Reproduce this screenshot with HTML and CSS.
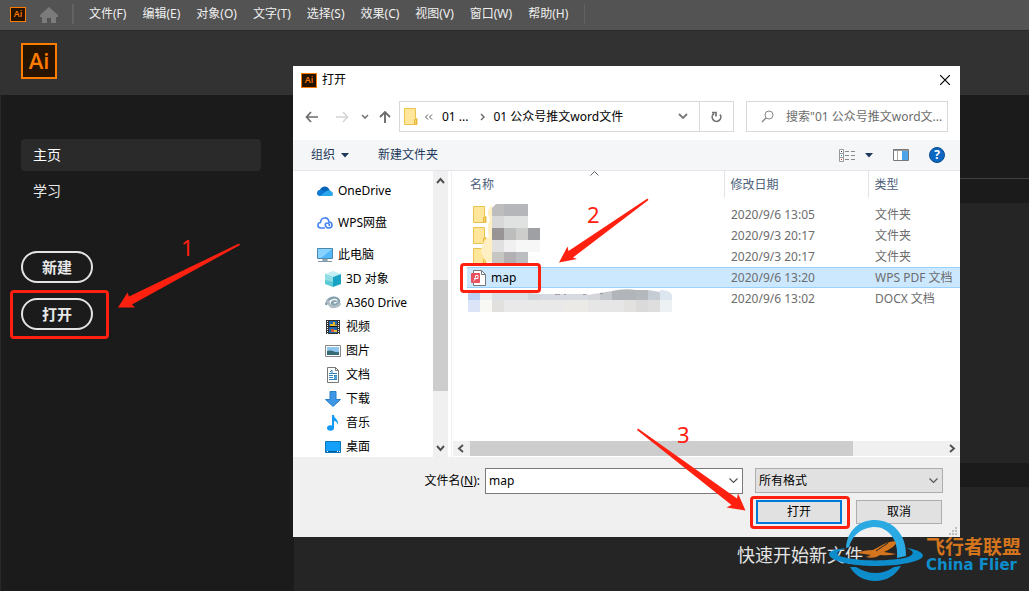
FILE: index.html
```html
<!DOCTYPE html>
<html lang="zh-CN">
<head>
<meta charset="utf-8">
<title>Ai 打开</title>
<link rel="stylesheet" href="styles.css">
</head>
<body>
<div class="app">
  <nav class="menubar">
    <span class="logo logo-small">Ai</span>
    <button class="home" aria-label="主页"><svg width="18" height="16" viewBox="0 0 18 16"><path fill="#7b7b7b" d="M9 0 18 8v2h-2v6h-5v-5H7v5H2v-6H0V8z"/></svg></button>
    <div class="menu">
      <button>文件(F)</button><button>编辑(E)</button><button>对象(O)</button><button>文字(T)</button><button>选择(S)</button><button>效果(C)</button><button>视图(V)</button><button>窗口(W)</button><button>帮助(H)</button>
    </div>
  </nav>
  <header class="brand"><span class="logo logo-large">Ai</span></header>
  <div class="home-body">
    <aside class="side">
      <a class="side-link current" href="#">主页</a>
      <a class="side-link" href="#">学习</a>
      <div class="side-actions">
        <button>新建</button>
        <button>打开</button>
      </div>
    </aside>
    <main class="stage">
      <div class="band band-top"></div>
      <div class="band band-row"></div>
      <div class="panel"></div>
      <div class="band band-low"></div>
      <h2 class="quick">快速开始新文件</h2>
    </main>
  </div>
</div>

<section class="dialog" role="dialog" aria-label="打开">
  <div class="titlebar">
    <span class="logo logo-small">Ai</span><span class="title">打开</span>
    <button class="close" aria-label="关闭"><svg width="10" height="10" viewBox="0 0 10 10"><path d="M0 0 10 10M10 0 0 10" stroke="#000" stroke-width="1.200"/></svg></button>
  </div>
  <div class="navrow">
    <div class="arrows">
      <button aria-label="后退"><svg width="14" height="12" viewBox="0 0 14 12"><path d="M13 6H2M6 1 1.500 6 6 11" fill="none" stroke="#6d6d6d" stroke-width="1.700"/></svg></button>
      <button aria-label="前进"><svg width="14" height="12" viewBox="0 0 14 12"><path d="M1 6h11M8 1l4.500 5L8 11" fill="none" stroke="#d4d4d4" stroke-width="1.500"/></svg></button>
      <button class="narrow" aria-label="最近"><svg width="8" height="6" viewBox="0 0 8 6"><path d="m1 1 3 3 3-3" fill="none" stroke="#777" stroke-width="1.600"/></svg></button>
      <button class="narrow" aria-label="向上"><svg width="12" height="14" viewBox="0 0 12 14"><path d="M6 13V2M1 7l5-5 5 5" fill="none" stroke="#6d6d6d" stroke-width="1.900"/></svg></button>
    </div>
    <div class="address">
      <svg class="folder" width="14" height="17" viewBox="0 0 14 17"><path d="M.5.500h11v10h1.500v6H.500z" fill="#ffe69a" stroke="#ebc44f"/><path d="M10.500 16v-4.500h2V16z" fill="#ffd966" stroke="#e5b93e"/></svg>
      <span class="crumbs"><svg width="9" height="6" viewBox="0 0 9 6"><path d="M4 .500 1.500 3 4 5.500M8 .500 5.500 3 8 5.500" fill="none" stroke="#555"/></svg><span>01 ...</span><svg class="sep" width="5" height="8" viewBox="0 0 5 8"><path d="m1 1 3 3-3 3" fill="none" stroke="#666" stroke-width="1.400"/></svg><span>01 公众号推文word文件</span></span>
      <button class="drop" aria-label="历史"><svg width="10" height="7" viewBox="0 0 10 7"><path d="m1 1 4 4 4-4" fill="none" stroke="#777" stroke-width="1.800"/></svg></button>
      <button class="refresh" aria-label="刷新"><svg width="12" height="12" viewBox="0 0 12 12"><path d="M3 2.500a4.300 4.300 0 1 0 6 1M1 1.500h4v4" fill="none" stroke="#737373" stroke-width="1.700"/></svg></button>
    </div>
    <label class="search">
      <svg width="13" height="13" viewBox="0 0 13 13"><path d="M5 8 1 12" stroke="#888" stroke-width="1.300"/><circle cx="8" cy="5" r="4" fill="none" stroke="#888"/></svg>
      <input type="text" aria-label="搜索" placeholder='搜索"01 公众号推文word文...'>
    </label>
  </div>
  <div class="toolbar">
    <button>组织<svg width="8" height="5" viewBox="0 0 8 5"><path d="M0 0h8L4 4.500z" fill="#1e395b"/></svg></button>
    <button>新建文件夹</button>
    <div class="view-tools">
      <button class="view" aria-label="视图"><svg width="17" height="13" viewBox="0 0 17 13"><path d="M.5.500h4v12h-4zM.500 4.500h4M.500 8.500h4" fill="#fff" stroke="#999"/><path d="M2 2h1v1H2z" fill="#333"/><path d="M2 6h1v1H2z" fill="#2f73c9"/><path d="M2 10h1v1H2z" fill="#d23"/><path d="M6 2.500h4m2 0h4M6 6.500h4m2 0h4M6 10.500h4m2 0h4" stroke="#8a8a8a"/></svg><svg width="8" height="5" viewBox="0 0 8 5"><path d="M0 0h8L4 4.500z" fill="#1e395b"/></svg></button>
      <button aria-label="预览窗格"><svg width="16" height="12" viewBox="0 0 16 12"><path d="M.5.500h15v11H.500z" fill="#fff" stroke="#777"/><path d="M1 1h14v1H1z" fill="#999"/><path d="M4.500 2v9" stroke="#aaa"/><path d="M9 2h6v9H9z" fill="#4ea4e8"/></svg></button>
      <button class="help" aria-label="帮助">?</button>
    </div>
  </div>
  <div class="content">
    <ul class="tree">
      <li class="root"><svg width="16" height="16" viewBox="0 0 16 16"><path d="M3 7c1-4 7-5 9-1l2 4H5z" fill="#0364b8"/><path d="M0 10c0-3 3-4 5-3l6 3-5 3H3c-2 0-3-1-3-3" fill="#0f78d4"/><path d="M8 9c3-3 8-1 8 2 0 2-1 2-3 2H3z" fill="#28a8ea"/></svg>OneDrive</li>
      <li class="root"><svg width="16" height="16" viewBox="0 0 16 16"><path d="M8 13H4C0 13 0 8 3.500 7.500 4 2 11 1 12 7c4 0 4 6 0 6-4 0-5-5-2-5 2 0 3 2 2 3" fill="none" stroke="#4584f0" stroke-width="1.600"/></svg>WPS网盘</li>
      <li class="root"><svg width="16" height="16" viewBox="0 0 16 16"><path d="M.5 1.500h15v10H.500z" fill="#53b9f8" stroke="#4b87a8"/><path d="m1 2 14 0-11 9H1z" fill="#87d2ff"/><path d="M6 12h4v2H6zM1 14.500h14" fill="#a7b2ba" stroke="#8199aa"/></svg>此电脑</li>
      <li><svg width="16" height="16" viewBox="0 0 16 16"><path d="m0 3 8-3 8 3-8 3z" fill="#c4eef4"/><path d="m0 3 8 3v10l-8-3z" fill="#5bc9d6"/><path d="m8 6 8-3v10l-8 3z" fill="#18a3c5"/><path d="m0 3 8 3v5L0 9z" fill="#8edde4"/></svg>3D 对象</li>
      <li><svg width="16" height="16" viewBox="0 0 16 16"><path d="M1 10C3 1 13 1 14 6c0 4-7 5-7 2 0-2 4-2 4-1" fill="none" stroke="#87a0ae" stroke-width="2.500"/><path d="M1 6c4-1 2 5 6 6 4 0 7-1 8-4" fill="none" stroke="#aebcc5" stroke-width="2.500"/></svg>A360 Drive</li>
      <li><svg width="16" height="16" viewBox="0 0 16 16"><path d="M1 1h14v14H1z" fill="#333"/><path d="M4 2h8v12H4z" fill="#2468b0"/><path d="M4 7.500h8" stroke="#111"/><path d="M5 5h3V3h2v3h2v1H5z" fill="#e4b729"/><path d="M6 10h3v3H6z" fill="#d45b32"/><path d="M9 11h3v2H9z" fill="#ebbd3b"/><path d="M2.500 2v13M13.500 2v13" stroke="#fff" stroke-dasharray="1 1"/></svg>视频</li>
      <li><svg width="16" height="16" viewBox="0 0 16 16"><path d="M.5 2.500h15v11H.500z" fill="#fff" stroke="#888"/><path d="M2 4h12v8H2z" fill="#8ec8ee"/><path d="M2 8c5-2 7 2 12 1v3H2z" fill="#376b73"/></svg>图片</li>
      <li><svg width="16" height="16" viewBox="0 0 16 16"><path d="M2.500.500h8l3 3v12h-11z" fill="#fff" stroke="#777"/><path d="M10.500.500v3h3" fill="none" stroke="#777"/><path d="M4 6.500h8M4 8.500h4m1 0h3M4 10.500h4M4 12.500h8M5 5l2-2v3" stroke="#3384bb" fill="none"/><path d="M9 9h3v3H9z" fill="#51a4d9"/></svg>文档</li>
      <li><svg width="16" height="16" viewBox="0 0 16 16"><path d="M5 .500h6v8h4.500L8 15.500.500 8.500H5z" fill="#3e97e5" stroke="#287ec8"/></svg>下载</li>
      <li><svg width="16" height="16" viewBox="0 0 16 16"><ellipse cx="5.500" cy="13" rx="3.500" ry="2.700" fill="#149af5"/><path d="M7 0h2c0 4 5 4 4 10-1-3-2-4-4-4v7H7z" fill="#149af5"/></svg>音乐</li>
      <li><svg width="16" height="16" viewBox="0 0 16 16"><path d="M.5 2.500h15v11H.500z" fill="#12a0fa" stroke="#0875bd"/><path d="M1 12.500h14" stroke="#075997"/><path d="M2 12.500h1m9 0h1m1 0h1" stroke="#fff"/></svg>桌面</li>
    </ul>
    <div class="vscroll">
      <svg width="9" height="16" viewBox="0 0 9 16"><path d="m1 10 3.500-4L8 10" fill="none" stroke="#505050" stroke-width="1.900"/></svg>
      <span class="vthumb"></span>
      <svg width="9" height="16" viewBox="0 0 9 16"><path d="m1 6 3.500 4L8 6" fill="none" stroke="#505050" stroke-width="1.900"/></svg>
    </div>
    <div class="files">
      <table>
        <colgroup><col><col class="col-date"><col class="col-type"></colgroup>
        <thead><tr><th>名称</th><th>修改日期</th><th>类型</th></tr></thead>
        <tbody>
          <tr class="spacer"><td colspan="3"></td></tr>
          <tr><td><svg width="14" height="17" viewBox="0 0 14 17"><path d="M.5.500h11v10h1.500v6H.500z" fill="#ffe69a" stroke="#ebc44f"/><path d="M10.500 16v-4.500h2V16z" fill="#ffd966" stroke="#e5b93e"/></svg></td><td>2020/9/6 13:05</td><td>文件夹</td></tr>
          <tr><td><svg width="14" height="17" viewBox="0 0 14 17"><path d="M.5.500h11v10h1.500v6H.500z" fill="#ffe69a" stroke="#ebc44f"/><path d="M10.500 16v-4.500h2V16z" fill="#ffd966" stroke="#e5b93e"/></svg></td><td>2020/9/3 20:17</td><td>文件夹</td></tr>
          <tr><td><svg width="14" height="17" viewBox="0 0 14 17"><path d="M.5.500h11v10h1.500v6H.500z" fill="#ffe69a" stroke="#ebc44f"/><path d="M10.500 16v-4.500h2V16z" fill="#ffd966" stroke="#e5b93e"/></svg></td><td>2020/9/3 20:17</td><td>文件夹</td></tr>
          <tr class="selected"><td><span class="file"><svg width="15" height="16" viewBox="0 0 15 16"><path d="M2.500.500h8l4 4v11h-12z" fill="#fff" stroke="#777"/><path d="M10.500.500v4h4" fill="none" stroke="#777"/><rect y="3" width="9" height="10" rx="1" fill="#e7505c"/><path d="M2.500 11c2-1 2-3 2-5.500h2.500v3H3" fill="none" stroke="#fff"/></svg>map</span></td><td>2020/9/6 13:20</td><td>WPS PDF 文档</td></tr>
          <tr><td></td><td>2020/9/6 13:02</td><td>DOCX 文档</td></tr>
        </tbody>
      </table>
      <svg class="sort" width="9" height="5" viewBox="0 0 9 5"><path d="m.5 4.500 4-4 4 4" fill="none" stroke="#666"/></svg>
      <svg class="mosaic" width="206" height="109" viewBox="467 204 206 109">
        <path d="M492 205q-7 6-2 14-4 8-1 17-7 5-8 16l5 10h6z" fill="#fff0c4"/>
        <path fill="#bdbdbd" d="M492 208l4-4h8v12h-12z"/><path fill="#b5b6ba" d="M504 204h24v12h-24z"/>
        <path fill="#d8d8d8" d="M492 216h12v12h-12z"/><path fill="#e0e2e1" d="M504 216h24v12h-24z"/>
        <path fill="#989496" d="M492 228h12v12h-12z"/><path fill="#bdbdbd" d="M504 228h12v12h-12z"/><path fill="#cdcdcb" d="M516 228h12v12h-12z"/><path fill="#9fa0a4" d="M528 228h12v12h-12z"/>
        <path fill="#e0e0e0" d="M492 240h12v12h-12z"/><path fill="#f0f0f0" d="M504 240h12v12h-12z"/><path fill="#f7f7f7" d="M516 240h24v12h-24z"/>
        <path fill="#c6c6c2" d="M492 252h12v11h-12z"/><path fill="#b2b0b2" d="M504 252h12v11h-12z"/><path fill="#bcbdc1" d="M516 252h12v11h-12z"/>
        <path fill="#bcd0f5" d="M468 293h12v7h-12z"/><path fill="#ecf0f0" d="M480 293h12v7h-12z"/><path fill="#dcdfe3" d="M492 293h36v7h-36z"/><path fill="#d0d5dc" d="M528 293l12 1v6h-12z"/><path fill="#d6dae0" d="M540 294h48v6h-48z"/>
        <path fill="#d3d5d8" d="M588 295l12-2v7h-12z"/><path fill="#c5c8cc" d="M600 293l12-2v9h-12z"/><path fill="#b1b5b9" d="M612 291q12-3 24-1v10h-24z"/><path fill="#b4b8bc" d="M636 290h12v10h-12z"/><path fill="#c5ccd3" d="M648 290l12 2v8h-12z"/><path fill="#dde6ee" d="M660 290q10 0 12 5v5h-12z"/>
        <path fill="#dce5f8" d="M468 300h12v12h-12z"/><path fill="#f8f8f5" d="M480 300h12v12h-12z"/><path fill="#e1e0de" d="M492 300h12v12h-12z"/><path fill="#e9e9e9" d="M504 300h60v12h-60z"/><path fill="#ebeae6" d="M564 300h24v12h-24z"/><path fill="#e6e6e6" d="M588 300h36v12h-36z"/><path fill="#e2e1df" d="M624 300h12v12h-12z"/><path fill="#dadada" d="M636 300h12v12h-12z"/><path fill="#dedede" d="M648 300h12v12h-12z"/><path fill="#edf1f4" d="M660 300h12v12h-12z"/>
        <path d="M555 294.500h5m4 0h2m17 0h3m14-1h3" stroke="#666" stroke-opacity=".5"/>
      </svg>
      <div class="hscroll">
        <svg width="17" height="9" viewBox="0 0 17 9"><path d="M10 1 6 4.500 10 8" fill="none" stroke="#505050" stroke-width="1.900"/></svg>
        <span class="htrack"><span class="hthumb"></span></span>
        <svg width="17" height="9" viewBox="0 0 17 9"><path d="m7 1 4 3.500L7 8" fill="none" stroke="#505050" stroke-width="1.900"/></svg>
      </div>
    </div>
  </div>
  <form class="footer">
    <label for="fname">文件名(<u>N</u>):</label>
    <div class="combo"><input id="fname" type="text" value="map"><svg width="9" height="6" viewBox="0 0 9 6"><path d="m.5.500 4 4 4-4" fill="none" stroke="#555" stroke-width="1.200"/></svg></div>
    <div class="format"><select aria-label="文件类型"><option>所有格式</option></select><svg width="9" height="6" viewBox="0 0 9 6"><path d="m.5.500 4 4 4-4" fill="none" stroke="#555" stroke-width="1.200"/></svg></div>
    <div class="buttons"><button type="button" class="primary">打开</button><button type="button">取消</button></div>
    <svg class="grip" width="8" height="8" viewBox="0 0 8 8"><path d="M6 0h2v2H6zM3 3h2v2H3zM6 3h2v2H6zM0 6h2v2H0zM3 6h2v2H3zM6 6h2v2H6z" fill="#bfbfbf"/></svg>
  </form>
</section>

<span class="mark mark-1"></span>
<span class="mark mark-2"></span>
<span class="mark mark-3"></span>
<svg class="arrow arrow-1" width="124" height="66" viewBox="117 243 124 66"><path d="M239 243.500 129 296.500 127.500 292.500 118 307.500H135L132 304.500 240 245z"/></svg>
<svg class="arrow arrow-2" width="91" height="66" viewBox="558 198 91 66"><path d="M647.500 198.500 568.500 251 567.500 246.500 559 262.500 577 259 573 257.500 648.500 200z"/></svg>
<svg class="arrow arrow-3" width="110" height="84" viewBox="636 428 110 84"><path d="M638 428.500 737 498.500 738 493.500 745.500 510.500 726.500 507.500 731.500 505 637 430z"/></svg>
<span class="num num-1">1</span>
<span class="num num-2">2</span>
<span class="num num-3">3</span>

<div class="watermark">
  <svg width="96" height="64" viewBox="828 518 96 64">
    <path d="M846 548C847 530 860 520 875 520 893 520 907 535 906 556L897 558C899 540 888 526 873 527 861 528 852 536 849 547z" fill="#2aa9e2"/>
    <path d="M850 567 856 567Q876 579 894 567L901 566C895 576 886 581 875 581 865 581 855 576 850 567z" fill="#0d8dcc"/>
    <path d="M846 548C836 551 834 555 843 557 860 562 895 561 908 557 915 554 914 551 907 548 919 550 923 553 923 556 921 562 898 566 875 566 852 566 829 561 829 554 829 551 836 549 846 548z" fill="#0d8dcc"/>
    <path d="M857 553Q864 550 873 550L884 544Q896 539 896 543 895 547 884 552L896 554Q888 556 880 555 875 559 866 557L871 555z" fill="#d4751d"/>
    <path d="m876 551 12-8" stroke="#252525" stroke-width="1"/>
  </svg>
  <div class="wm-text"><span class="wm-cn">飞行者联盟</span><span class="wm-en">China Flier</span></div>
</div>
</body>
</html>
```
FILE: styles.css
```css
* { box-sizing: border-box; }
body {
  margin: 0;
  position: relative;
  background: #252525;
  font: 12px/16px "Noto Sans", "Noto Sans CJK SC", sans-serif;
  color: #000;
}
button, input, select { font: inherit; color: inherit; }
button { border: 0; padding: 0; background: none; }
svg { display: block; flex: none; }

/* application window */
.app { min-height: 100vh; display: flex; flex-direction: column; }
.menubar {
  display: flex; align-items: center; height: 31px;
  padding: 0 0 2px 10px; background: #535353; border-bottom: 1px solid #2a2a2a;
}
.logo {
  display: flex; align-items: center; justify-content: center; flex: none;
  background: #261300; color: #ff7c00; border: 1px solid #ff7c00;
  font-family: "Open Sans", sans-serif; font-weight: 600;
}
.logo-small { width: 16px; height: 15px; font-size: 9px; line-height: 12px; }
.logo-large { width: 36px; height: 36px; border-width: 2px; padding-bottom: 3px; font-size: 22px; line-height: 30px; }
.home { margin: 2px 14px 0 14px; }
.menu {
  display: flex; gap: 16px; padding: 0 16px 0 15px; color: #f0f0f0;
  border-left: 2px solid #626262; border-right: 1px solid #626262; line-height: 20px;
}
.brand { display: flex; padding: 12px 21px 16px; background: #323232; }
.home-body { flex: 1; display: flex; background: #1b1b1b; }
.side { width: 294px; padding: 44px 33px 0 20px; border-left: 1px solid #282828; }
.side-link {
  display: block; margin-bottom: 4px; padding: 6px 12px; border-radius: 4px;
  color: #e8e8e8; font-size: 14px; line-height: 20px; text-decoration: none;
}
.side-link.current { background: #2a2a2a; color: #fff; }
.side-actions { display: flex; flex-direction: column; gap: 15px; margin-top: 44px; }
.side-actions button {
  width: 72px; height: 32px; border: 2px solid #e3e3e3; border-radius: 16px;
  color: #e8e8e8; font-size: 15px; font-weight: 700; line-height: 20px;
}
.stage { flex: 1; background: #252525; }
.band { background: #1b1b1b; }
.band-top { height: 84px; border-bottom: 1px solid #404040; }
.band-row { height: 24px; }
.panel { height: 260px; }
.band-low { height: 24px; }
.quick {
  margin: 0; padding: 56px 166px 0 0; text-align: right;
  color: #e4e4e4; font-size: 18px; font-weight: 400; line-height: 24px;
}

/* open dialog */
.dialog { position: absolute; left: 293px; right: 69px; top: 66px; background: #fff; }
.titlebar { display: flex; align-items: center; height: 28px; padding: 0 10px 0 8px; gap: 5px; }
.close { margin-left: auto; }
.navrow { display: flex; align-items: center; padding: 7px 12px 8px 12px; }
.arrows { display: flex; align-items: center; width: 94px; gap: 16px; }
.arrows .narrow { margin: 0 -2px 0 -4px; }
.address { flex: 1; display: flex; align-items: center; height: 31px; border: 1px solid #d9d9d9; min-width: 0; }
.folder { margin: 0 6px 0 4px; }
.crumbs { flex: 1; display: flex; align-items: center; gap: 9px; white-space: nowrap; }
.sep { margin: 0 0 0 2px; }
.drop { padding: 0 11px; }
.refresh { display: flex; align-items: center; justify-content: center; width: 34px; height: 29px; border-left: 1px solid #d9d9d9; }
.search {
  display: flex; align-items: center; gap: 12px; width: 202px; height: 31px;
  margin-left: 12px; padding: 0 1px 0 14px; border: 1px solid #d9d9d9;
}
.search input { flex: 1; min-width: 0; border: 0; padding: 0; outline: 0; background: none; }
.search input::placeholder { color: #6d6d6d; }
.toolbar {
  display: flex; align-items: center; gap: 29px; height: 31px; padding: 0 15px 0 18px;
  background: #f5f6f8; border-bottom: 1px solid #e4e6e9; color: #1e395b;
}
.toolbar button { display: flex; align-items: center; gap: 6px; }
.view-tools { display: flex; align-items: center; gap: 20px; margin-left: auto; }
.view-tools .view { gap: 9px; }
.toolbar .help {
  justify-content: center; width: 16px; height: 16px; border-radius: 8px;
  background: #0b67c1; border: 1px solid #0a4d91; color: #fff; font-size: 12px; line-height: 14px; font-weight: 700;
}
.content { display: flex; height: 286px; overflow: hidden; }
.tree { width: 140px; margin: 0; padding: 8px 0 0; list-style: none; white-space: nowrap; }
.tree li { display: flex; align-items: center; gap: 5px; height: 24px; padding-left: 32px; }
.tree .root { padding-left: 24px; margin-bottom: 8px; }
.tree .root:nth-child(3) { margin-bottom: 0; }
.vscroll {
  display: flex; flex-direction: column; align-items: center;
  width: 15px; background: #f0f0f0; padding: 2px 0 1px;
}
.vthumb { width: 15px; height: 111px; background: #cdcdcd; margin: 91px 0 auto; }
.files {
  position: relative; flex: 1; min-width: 0; display: flex; flex-direction: column; justify-content: space-between;
  margin-left: 3px; border-left: 1px solid #f0f0f0; padding: 0 0 1px 15px;
}
table { width: 100%; table-layout: fixed; border-collapse: collapse; color: #6d6d6d; }
.col-date { width: 144px; }
.col-type { width: 92px; }
th { height: 27px; padding: 0 3px; text-align: left; font-weight: 400; color: #4c607a; }
th + th { padding-left: 6px; border-left: 1px solid #e3e3e3; }
td { height: 21px; padding: 0 0 0 7px; line-height: 18px; white-space: nowrap; }
td:first-child { padding-left: 6px; }
.spacer td { height: 6px; }
.selected { background: #cce8ff; box-shadow: inset 0 1px #99d1ff, inset 0 -1px #99d1ff; }
.file { display: flex; align-items: center; gap: 5px; margin-left: -2px; color: #000; }
.sort { position: absolute; left: 138px; top: 0; }
.mosaic { position: absolute; left: 15px; top: 33px; }
.hscroll { display: flex; align-items: center; height: 15px; margin-left: -14px; background: #f0f0f0; }
.htrack { flex: 1; height: 15px; }
.hthumb { display: block; width: 81%; height: 15px; background: #cdcdcd; }
.footer {
  position: relative; display: grid; grid-template-columns: 192px 1fr 188px; row-gap: 6px;
  padding: 11px 17px 13px 0; background: #f0f0f0;
}
.footer label { padding: 5px 5px 0 0; text-align: right; }
.combo, .format { display: flex; align-items: center; height: 26px; padding-right: 4px; }
.combo { margin-right: 12px; border: 1px solid #7a7a7a; background: #fff; }
.combo input { flex: 1; min-width: 0; border: 0; outline: 0; padding: 0 3px; background: none; }
.format { height: 25px; border: 1px solid #adadad; background: #e1e1e1; }
.format select { flex: 1; appearance: none; border: 0; outline: 0; padding: 0 3px; background: none; }
.buttons { grid-column: 2 / 4; display: flex; justify-content: flex-end; gap: 14px; padding-right: 1px; }
.buttons button { width: 86px; height: 24px; border: 1px solid #adadad; background: #e1e1e1; }
.buttons .primary { border: 2px solid #0078d7; }
.grip { position: absolute; right: 3px; bottom: 2px; }

/* annotations */
.mark { position: absolute; border: 3px solid #ff2010; border-radius: 4px; }
.mark-1 { left: 10px; top: 290px; width: 99px; height: 49px; }
.mark-2 { left: 460px; top: 263px; width: 81px; height: 30px; }
.mark-3 { left: 750px; top: 496px; width: 100px; height: 33px; }
.arrow { position: absolute; fill: #ff2010; }
.arrow-1 { left: 117px; top: 243px; }
.arrow-2 { left: 558px; top: 198px; }
.arrow-3 { left: 636px; top: 428px; }
.num { position: absolute; color: #ff2010; font-size: 22px; line-height: 24px; }
.num-1 { left: 181px; top: 235px; }
.num-2 { left: 587px; top: 202px; }
.num-3 { left: 677px; top: 422px; }

.watermark { position: absolute; left: 828px; top: 518px; display: flex; align-items: flex-start; gap: 2px; white-space: nowrap; }
.wm-text { display: flex; flex-direction: column; padding-top: 21px; font-weight: 700; }
.wm-cn { color: #d4751d; font-size: 19px; line-height: 16px; }
.wm-en { color: #0d8dcc; font-family: "DejaVu Sans", sans-serif; font-size: 15px; line-height: 20px; }
```
